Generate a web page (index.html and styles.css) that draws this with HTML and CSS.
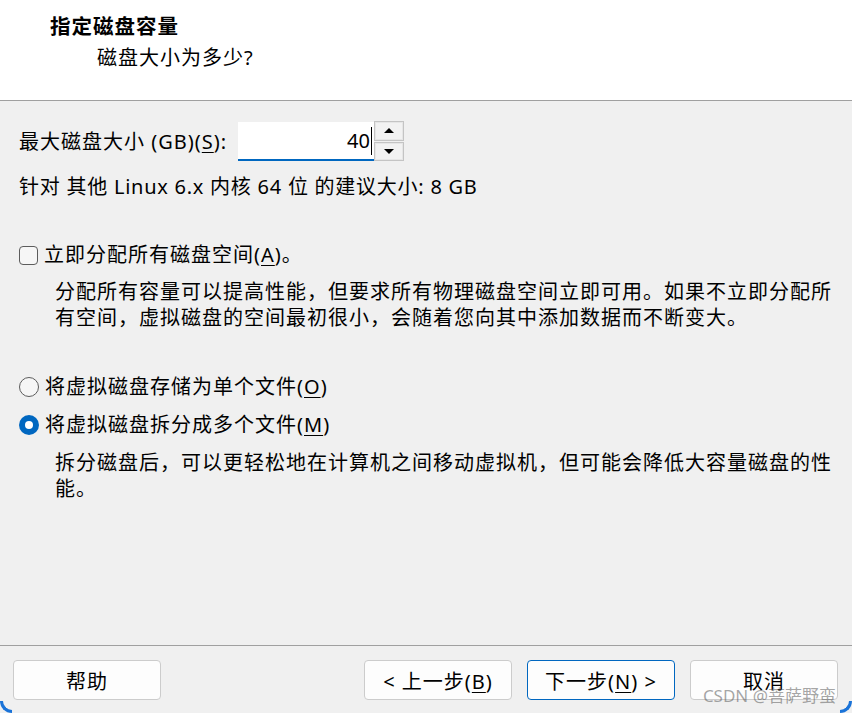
FILE: index.html
```html
<!DOCTYPE html>
<html lang="zh-CN">
<head>
<meta charset="utf-8">
<title>指定磁盘容量</title>
<link rel="stylesheet" href="styles.css">
</head>
<body>
<div class="dialog">
  <header class="head">
    <div class="title">指定磁盘容量</div>
    <div class="subtitle">磁盘大小为多少?</div>
  </header>

  <main class="body">
    <div class="size-row">
      <label class="size-label">最大磁盘大小 (GB)(<u>S</u>):</label>
      <div class="spin">
        <div class="spin-input"><span class="val">40</span><span class="caret"></span></div>
        <div class="spin-btns">
          <div class="spin-btn"><span class="tri up"></span></div>
          <div class="spin-btn"><span class="tri down"></span></div>
        </div>
      </div>
    </div>
    <div class="hint">针对 其他 Linux 6.x 内核 64 位 的建议大小: 8 GB</div>

    <div class="option check-opt">
      <span class="box"></span>
      <span class="opt-label">立即分配所有磁盘空间(<u>A</u>)。</span>
    </div>
    <div class="desc">
      <span class="line">分配所有容量可以提高性能，但要求所有物理磁盘空间立即可用。如果不立即分配所</span>
      <span class="line">有空间，虚拟磁盘的空间最初很小，会随着您向其中添加数据而不断变大。</span>
    </div>

    <div class="option radio-first">
      <span class="radio"></span>
      <span class="opt-label">将虚拟磁盘存储为单个文件(<u>O</u>)</span>
    </div>
    <div class="option radio-second">
      <span class="radio on"></span>
      <span class="opt-label">将虚拟磁盘拆分成多个文件(<u>M</u>)</span>
    </div>
    <div class="desc desc-tight">
      <span class="line">拆分磁盘后，可以更轻松地在计算机之间移动虚拟机，但可能会降低大容量磁盘的性</span>
      <span class="line">能。</span>
    </div>
  </main>

  <footer class="foot">
    <button class="btn">帮助</button>
    <div class="spacer"></div>
    <button class="btn">&lt; 上一步(<u>B</u>)</button>
    <button class="btn primary">下一步(<u>N</u>) &gt;</button>
    <button class="btn">取消</button>
  </footer>
  <div class="watermark">CSDN @菩萨野蛮</div>
  <span class="corner left"></span>
  <span class="corner right"></span>
</div>
</body>
</html>
```

FILE: styles.css
```css
* { box-sizing: border-box; }
html, body { margin: 0; padding: 0; }
body {
  width: 852px;
  height: 713px;
  overflow: hidden;
  background: #f0f0f0;
  font-family: "Noto Sans", "Noto Sans CJK SC", sans-serif;
  font-size: 20px;
  letter-spacing: 1px;
  color: #000;
}
u { text-decoration: underline; text-underline-offset: 3px; text-decoration-thickness: 1px; }

.dialog {
  position: relative;
  width: 852px;
  height: 713px;
  display: flex;
  flex-direction: column;
}

.head {
  height: 101px;
  background: #fff;
  border-bottom: 1px solid #a0a0a0;
  padding-top: 13px;
}
.title {
  padding-left: 50px;
  font-weight: bold;
  font-size: 20.5px;
  line-height: 26px;
  height: 26px;
}
.subtitle {
  padding-left: 97px;
  margin-top: 6px;
  line-height: 26px;
  height: 26px;
}

.body {
  flex: 1;
  padding: 20px 0 0 19px;
}
.size-row {
  display: flex;
  align-items: center;
  height: 40px;
}
.size-label {
  width: 219px;
  line-height: 26px;
  padding-top: 2px;
}
.spin {
  display: flex;
  height: 40px;
}
.spin-input {
  width: 136px;
  height: 39px;
  margin-top: 1px;
  background: #fff;
  border-bottom: 2px solid #0067c0;
  display: flex;
  justify-content: flex-end;
  align-items: center;
  padding-right: 2px;
}
.val { line-height: 26px; letter-spacing: 0; }
.caret {
  width: 1px;
  height: 28px;
  background: #000;
  margin-left: 1px;
}
.spin-btns {
  width: 30px;
  display: flex;
  flex-direction: column;
  gap: 1px;
}
.spin-btn {
  flex: 1;
  border: 1px solid #c4c4c4;
  box-shadow: inset 0 0 0 1px #e6e6e6;
  background: #f2f2f2;
  display: flex;
  align-items: center;
  justify-content: center;
}
.tri {
  width: 0;
  height: 0;
  border-left: 5px solid transparent;
  border-right: 5px solid transparent;
}
.tri.up { border-bottom: 5px solid #000; }
.tri.down { border-top: 5px solid #000; }

.hint {
  margin-top: 13px;
  line-height: 26px;
  height: 26px;
  letter-spacing: 0.75px;
}

.option {
  display: flex;
  align-items: center;
  height: 26px;
  line-height: 26px;
}
.check-opt { margin-top: 42px; }
.radio-first { margin-top: 43px; }
.radio-second { margin-top: 12px; }
.opt-label { margin-left: 6px; }

.box {
  width: 19px;
  height: 19px;
  border: 1px solid #5c5c5c;
  border-radius: 4px;
  background: #f6f6f6;
}
.radio {
  width: 20px;
  height: 20px;
  border-radius: 50%;
  border: 1px solid #5c5c5c;
  background: #f6f6f6;
  position: relative;
}
.radio.on {
  border: none;
  background: #0067c0;
}
.radio.on::after {
  content: "";
  position: absolute;
  left: 6px;
  top: 6px;
  width: 8px;
  height: 8px;
  border-radius: 50%;
  background: #fff;
}

.desc {
  margin-top: 11px;
  padding-left: 36px;
}
.desc-tight { margin-top: 12px; }
.line {
  display: block;
  white-space: nowrap;
  line-height: 26px;
  height: 26px;
}

.foot {
  height: 68px;
  border-top: 1px solid #a0a0a0;
  display: flex;
  align-items: flex-start;
  gap: 15px;
  padding: 14px 14px 0 13px;
}
.spacer { flex: 1; }
.btn {
  width: 148px;
  height: 40px;
  border: 1px solid #cccccc;
  border-radius: 4px;
  background: #fdfdfd;
  font: inherit;
  letter-spacing: 1px;
  color: #000;
  padding: 0;
}
.btn.primary { border-color: #0067c0; }

.watermark {
  position: absolute;
  right: 16px;
  bottom: 6px;
  font-size: 17px;
  letter-spacing: 0;
  color: rgba(90, 90, 90, 0.55);
}
.corner {
  position: absolute;
  width: 12px;
  height: 12px;
  bottom: 0;
  border-bottom: 3px solid #1a73d8;
}
.corner.left {
  left: 0;
  border-left: 3px solid #1a73d8;
  border-bottom-left-radius: 12px;
}
.corner.right {
  right: 0;
  border-right: 3px solid #1a73d8;
  border-bottom-right-radius: 12px;
}
```
